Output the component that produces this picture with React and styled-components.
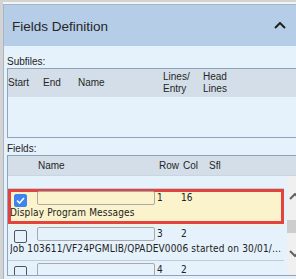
import styled, { createGlobalStyle } from 'styled-components';

const GlobalStyle = createGlobalStyle`
  html, body {
    margin: 0;
    background: #d3d3d3;
    overflow: hidden;
  }
  body {
    font-family: "Liberation Sans", Arial, sans-serif;
    color: #222;
  }
`;

const fields = [
  { id: 1, checked: false, row: 1, col: 12, text: '' },
  { id: 2, checked: true, row: 1, col: 16, text: 'Display Program Messages', selected: true },
  { id: 3, checked: false, row: 3, col: 2, text: 'Job 103611/VF24PGMLIB/QPADEV0006 started on 30/01/2024 at 10:12:44' },
  { id: 4, checked: false, row: 4, col: 2, text: '' },
];

function Chevron({ down, color = '#222', width = 12, height = 7 }) {
  return (
    <svg width={width} height={height} viewBox="0 0 12 7">
      <polyline
        points={down ? '1,1 6,6 11,1' : '1,6 6,1 11,6'}
        fill="none"
        stroke={color}
        strokeWidth="2"
      />
    </svg>
  );
}

function Check() {
  return (
    <svg width="9" height="7" viewBox="0 0 9 7">
      <polyline points="1,3.5 3.5,6 8,1" fill="none" stroke="#fff" strokeWidth="1.6" />
    </svg>
  );
}

function FieldRow({ field }) {
  return (
    <Row selected={field.selected}>
      <TopLine>
        <Box checked={field.checked}>{field.checked && <Check />}</Box>
        <NameInput />
        <Num>{field.row}</Num>
        <Num>{field.col}</Num>
      </TopLine>
      <Message>{field.text}</Message>
    </Row>
  );
}

export default function App() {
  return (
    <Page>
      <GlobalStyle />
      <Panel>
        <Header>
          <Title>Fields Definition</Title>
          <Chevron />
        </Header>
        <Body>
          <Label>Subfiles:</Label>
          <Table>
            <SubHead>
              <HeadCell>Start</HeadCell>
              <HeadCell>End</HeadCell>
              <HeadCell>Name</HeadCell>
              <HeadCell>Lines/<br />Entry</HeadCell>
              <HeadCell>Head<br />Lines</HeadCell>
            </SubHead>
            <SubBody />
          </Table>
          <Label>Fields:</Label>
          <Table>
            <FieldHead>
              <span />
              <HeadCell>Name</HeadCell>
              <HeadCell>Row</HeadCell>
              <HeadCell>Col</HeadCell>
              <HeadCell>Sfl</HeadCell>
            </FieldHead>
            <Scroller>
              <List>
                {fields.map(f => (
                  <FieldRow key={f.id} field={f} />
                ))}
              </List>
              <ScrollBar>
                <Chevron color="#606060" />
                <Thumb />
                <Chevron down color="#606060" />
              </ScrollBar>
            </Scroller>
          </Table>
        </Body>
      </Panel>
    </Page>
  );
}

const Page = styled.div`
  padding: 4px 0 0 3px;
  width: 300px;
`;

const Panel = styled.div`
  border: 1px solid #a6b6c7;
  box-shadow: 0 -2px 0 #f4f4f4;
`;

const Header = styled.div`
  height: 41px;
  background: #b5cde6;
  display: flex;
  align-items: center;
  justify-content: space-between;
  padding: 0 16px 0 8px;
`;

const Title = styled.div`
  font-size: 13.5px;
  color: #262626;
  padding-top: 1px;
`;

const Body = styled.div`
  background: #e5f1fb;
  padding: 10px 0 6px 3px;
`;

const Label = styled.div`
  font-size: 10px;
  line-height: 12px;
  height: 12px;
  color: #1e1e1e;
  margin-bottom: 0;

  & + div + & {
    margin-top: 5px;
  }
`;

const Table = styled.div`
  border: 1px solid #8fa4ba;
  border-right: none;
`;

const SubHead = styled.div`
  height: 28px;
  background: #d3dee8;
  display: grid;
  grid-template-columns: 35px 35px 85px 40px 1fr;
  align-items: center;
`;

const HeadCell = styled.div`
  font-size: 10px;
  line-height: 12px;
  color: #262626;
  white-space: nowrap;
`;

const SubBody = styled.div`
  height: 40px;
`;

const FieldHead = styled.div`
  height: 19px;
  background: #d3dee8;
  display: grid;
  grid-template-columns: 30px 121px 24px 26px 1fr;
  align-items: center;
  border-bottom: 1px solid #c9d6e2;
`;

const Scroller = styled.div`
  height: 99px;
  display: flex;
  overflow: hidden;
`;

const List = styled.div`
  flex: 1;
  min-width: 0;
  margin-top: -23px;
`;

const Row = styled.div`
  height: 35px;
  border-bottom: 1px solid ${p => (p.selected ? 'transparent' : '#c0ccd8')};
  margin-right: 3px;
  padding-left: 2px;
  background: ${p => (p.selected ? '#faf3cb' : 'transparent')};
  box-shadow: ${p => (p.selected ? 'inset 0 0 0 3px #e3433e' : 'none')};
`;

const TopLine = styled.div`
  display: flex;
  align-items: flex-start;
  height: 17px;
  padding: 2px 0 0 4px;
  box-sizing: border-box;
`;

const Box = styled.div`
  width: 13px;
  height: 13px;
  box-sizing: border-box;
  margin-top: 3px;
  border-radius: 2px;
  border: 1px solid ${p => (p.checked ? '#3d84ee' : '#555')};
  background: ${p => (p.checked ? '#3d84ee' : 'transparent')};
  display: flex;
  align-items: center;
  justify-content: center;
`;

const NameInput = styled.div`
  width: 118px;
  height: 14px;
  box-sizing: border-box;
  margin-left: 10px;
  border: 1px solid #a9a9a9;
  border-radius: 2px;
`;

const Num = styled.div`
  font-family: "DejaVu Sans Condensed", "DejaVu Sans", sans-serif;
  font-size: 10px;
  line-height: 14px;
  margin-left: 2px;
  width: 22px;
`;

const Message = styled.div`
  font-family: "DejaVu Sans Condensed", "DejaVu Sans", sans-serif;
  font-size: 10px;
  letter-spacing: 0.15px;
  line-height: 12px;
  margin-top: 1px;
  white-space: nowrap;
  overflow: hidden;
  text-overflow: ellipsis;
`;

const ScrollBar = styled.div`
  width: 15px;
  background: #f0f0f0;
  display: flex;
  flex-direction: column;
  align-items: center;
  padding-top: 17px;

  & > svg:first-child {
    margin-bottom: 20px;
  }
  & > svg:last-child {
    margin-top: 17px;
  }
`;

const Thumb = styled.div`
  align-self: stretch;
  margin-right: 2px;
  height: 13px;
  background: #cdcdcd;
`;
